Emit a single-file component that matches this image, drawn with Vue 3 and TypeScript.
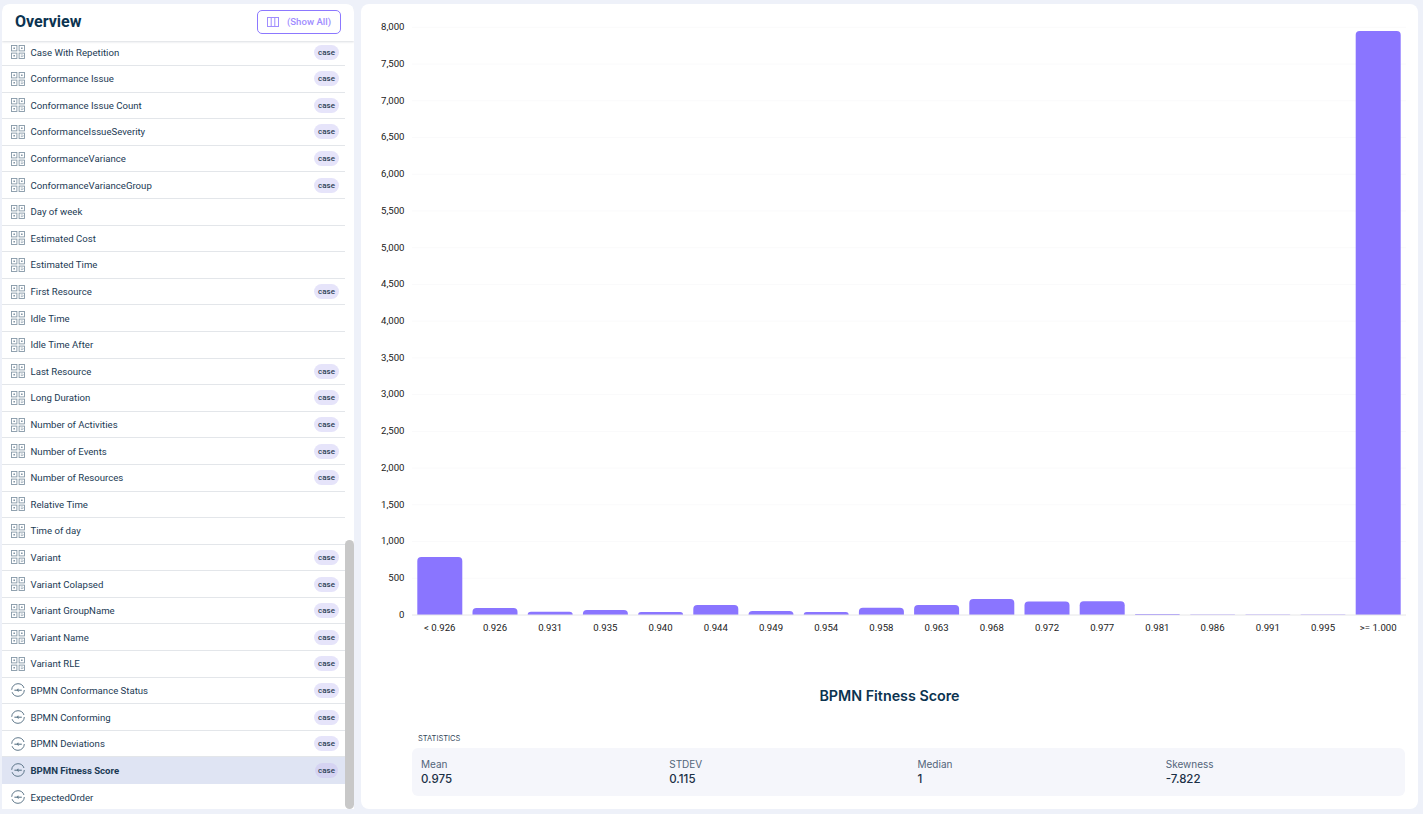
<script setup lang="ts">
type Row = { name: string; icon: 'grid' | 'flow'; tag?: boolean };

const gridRows: [string, boolean][] = [
  ['Case With Repetition', true],
  ['Conformance Issue', true],
  ['Conformance Issue Count', true],
  ['ConformanceIssueSeverity', true],
  ['ConformanceVariance', true],
  ['ConformanceVarianceGroup', true],
  ['Day of week', false],
  ['Estimated Cost', false],
  ['Estimated Time', false],
  ['First Resource', true],
  ['Idle Time', false],
  ['Idle Time After', false],
  ['Last Resource', true],
  ['Long Duration', true],
  ['Number of Activities', true],
  ['Number of Events', true],
  ['Number of Resources', true],
  ['Relative Time', false],
  ['Time of day', false],
  ['Variant', true],
  ['Variant Colapsed', true],
  ['Variant GroupName', true],
  ['Variant Name', true],
  ['Variant RLE', true],
];

const rows: Row[] = [
  ...gridRows.map(([name, tag]): Row => ({ name, icon: 'grid', tag })),
  { name: 'BPMN Conformance Status', icon: 'flow', tag: true },
  { name: 'BPMN Conforming', icon: 'flow', tag: true },
  { name: 'BPMN Deviations', icon: 'flow', tag: true },
  { name: 'BPMN Fitness Score', icon: 'flow', tag: true },
  { name: 'ExpectedOrder', icon: 'flow' },
];
const selected = 'BPMN Fitness Score';

// chart geometry, px inside the svg
const baseY = 611;
const perUnit = 73.46 / 1000;
const ticks = Array.from({ length: 17 }, (_, i) => i * 500);
const tickY = (t: number) => baseY - t * perUnit;

const bins: [string, number][] = [
  ['< 0.926', 790],
  ['0.926', 95],
  ['0.931', 45],
  ['0.935', 68],
  ['0.940', 40],
  ['0.944', 136],
  ['0.949', 55],
  ['0.954', 40],
  ['0.958', 100],
  ['0.963', 136],
  ['0.968', 218],
  ['0.972', 185],
  ['0.977', 188],
  ['0.981', 14],
  ['0.986', 10],
  ['0.991', 10],
  ['0.995', 10],
  ['>= 1.000', 7950],
];
const barW = 45;
const barX = (i: number) => 56.3 + i * 55.2;
const barPath = (i: number, v: number) => {
  const x = barX(i);
  const h = v * perUnit;
  const r = Math.min(4, h);
  return `M${x} ${baseY}V${baseY - h + r}Q${x} ${baseY - h} ${x + r} ${baseY - h}H${x + barW - r}Q${x + barW} ${baseY - h} ${x + barW} ${baseY - h + r}V${baseY}Z`;
};

const stats = [
  { label: 'Mean', value: '0.975' },
  { label: 'STDEV', value: '0.115' },
  { label: 'Median', value: '1' },
  { label: 'Skewness', value: '-7.822' },
];
</script>

<template>
  <div class="page">
    <aside class="side">
      <header class="side-head">
        <h1>Overview</h1>
        <button class="show-all">
          <svg width="12" height="10" viewBox="0 0 12 10" fill="none" stroke="currentColor" stroke-width="1">
            <rect x="0.5" y="0.5" width="11" height="9" />
            <path d="M4.2 0.5v9M7.8 0.5v9" />
          </svg>
          <span>(Show All)</span>
        </button>
      </header>
      <div class="list">
        <div
          v-for="row in rows"
          :key="row.name"
          class="row"
          :class="{ active: row.name === selected }"
        >
          <svg v-if="row.icon === 'grid'" class="ico" width="14" height="14" viewBox="0 0 14 14" fill="none" stroke="#8598a7" stroke-width="0.9">
            <rect x="0.5" y="0.5" width="5.4" height="5.4" />
            <rect x="8.1" y="0.5" width="5.4" height="5.4" />
            <rect x="0.5" y="8.1" width="5.4" height="5.4" />
            <rect x="8.1" y="8.1" width="5.4" height="5.4" />
            <path d="M2.4 3.2h1.6M10 3.2h1.6M2.4 10.8h1.6" stroke-width="1.6" />
            <path d="M9.8 10h1.6l1 .8-1 .8H9.8" stroke-width="0.7" />
          </svg>
          <svg v-else class="ico" width="14" height="14" viewBox="0 0 14 14" fill="none" stroke="#4f6a7e" stroke-width="0.9">
            <circle cx="7" cy="7" r="6.3" stroke-dasharray="17 2.5 17 3" />
            <path d="M3.4 7.2h2.4M8 7.2h2.8" stroke-width="1" />
            <path d="M5.6 7.2l1.6-1.4.4 2.6z" fill="#4f6a7e" stroke-width="0.5" />
          </svg>
          <span class="name">{{ row.name }}</span>
          <span v-if="row.tag" class="tag">case</span>
        </div>
      </div>
      <div class="thumb"></div>
    </aside>

    <main class="main">
      <svg class="chart" width="1057" height="660" viewBox="0 0 1057 660">
        <g v-for="t in ticks" :key="t">
          <line v-if="t > 0" x1="51" :x2="1045" :y1="tickY(t)" :y2="tickY(t)" stroke="#fafafb" />
          <text class="tick" x="43.5" :y="tickY(t) + 2.8" text-anchor="end">{{ t.toLocaleString('en-US') }}</text>
        </g>
        <path
          v-for="(bin, i) in bins"
          :key="bin[0]"
          :d="barPath(i, bin[1])"
          :fill="bin[1] < 12 ? '#b9a9ff' : '#8a75ff'"
        />
        <line x1="51" x2="1045" :y1="baseY" :y2="baseY" stroke="#e6e6e8" />
        <text
          v-for="(bin, i) in bins"
          :key="'l' + bin[0]"
          class="tick"
          :x="barX(i) + barW / 2"
          y="627"
          text-anchor="middle"
        >{{ bin[0] }}</text>
      </svg>
      <h2 class="title">BPMN Fitness Score</h2>
      <div class="stats-label">STATISTICS</div>
      <div class="stats">
        <div v-for="s in stats" :key="s.label" class="stat">
          <div class="stat-label">{{ s.label }}</div>
          <div class="stat-value">{{ s.value }}</div>
        </div>
      </div>
    </main>
  </div>
</template>

<style>
html,
body {
  margin: 0;
  background: #eef1f9;
}
</style>

<style scoped>
.page {
  display: flex;
  gap: 7px;
  height: 814px;
  padding: 4px 5px 5px 2px;
  box-sizing: border-box;
  overflow: hidden;
  font-family: Roboto, "Liberation Sans", sans-serif;
}
.side {
  position: relative;
  width: 352px;
  flex: none;
  display: flex;
  flex-direction: column;
  background: #fff;
  border-radius: 8px 8px 0 0;
  overflow: hidden;
}
.side-head {
  flex: none;
  height: 37px;
  display: flex;
  align-items: center;
  justify-content: space-between;
  padding: 0 13px 2px 13px;
  box-sizing: border-box;
  box-shadow: 0 1px 2px rgba(30, 50, 80, 0.16);
  position: relative;
  z-index: 1;
  background: #fff;
}
.side-head h1 {
  margin: 0;
  font-size: 16px;
  font-weight: 700;
  color: #0b3350;
}
.show-all {
  width: 84px;
  height: 24px;
  display: flex;
  align-items: center;
  justify-content: center;
  gap: 8px;
  padding: 0;
  border: 1px solid #8c78ff;
  border-radius: 5px;
  background: #fff;
  color: #a08dff;
  font-family: inherit;
  font-size: 9.6px;
  font-weight: 500;
}
.list {
  flex: 1;
  width: 343px;
  overflow: hidden;
}
.row {
  height: 26.6px;
  box-sizing: border-box;
  display: flex;
  align-items: center;
  padding: 0 6px 0 9px;
  border-bottom: 1px solid #e3e6ea;
  font-size: 9.6px;
  color: #1b3a54;
}
.row:first-child {
  margin-top: -1.6px;
}
.row:last-child {
  border-bottom: none;
}
.row.active {
  background: #dfe4f3;
  font-weight: 700;
  border-bottom-color: #dfe4f3;
}
.ico {
  flex: none;
  margin-right: 5.5px;
}
.name {
  flex: 1;
}
.tag {
  width: 25px;
  height: 15px;
  line-height: 15px;
  text-align: center;
  border-radius: 8px;
  background: #e6e4fa;
  color: #2b3f55;
  font-size: 8px;
  font-weight: 500;
}
.active .tag {
  width: 23px;
  margin-right: 1px;
  background: #d5d3f2;
}
.thumb {
  position: absolute;
  right: 0;
  top: 536px;
  bottom: 0;
  width: 9px;
  border-radius: 5px;
  background: #c8c8c8;
}
.main {
  flex: 1;
  min-width: 0;
  display: flex;
  flex-direction: column;
  background: #fff;
  border-radius: 8px;
}
.chart {
  display: block;
  flex: none;
}
.tick {
  font-family: Roboto, "Liberation Sans", sans-serif;
  font-size: 9.6px;
  fill: #222;
}
.title {
  margin: 23px 0 0;
  text-align: center;
  font-family: Inter, "Open Sans", sans-serif;
  font-size: 14.3px;
  line-height: 18px;
  font-weight: 600;
  color: #0b3350;
}
.stats-label {
  margin: 29px 0 0 57px;
  font-family: Inter, "Open Sans", sans-serif;
  font-size: 7.5px;
  line-height: 10px;
  color: #33475b;
}
.stats {
  margin: 4px 13px 0 51px;
  height: 48px;
  display: grid;
  grid-template-columns: repeat(4, 1fr);
  align-items: center;
  background: #f5f6fb;
  border-radius: 6px;
}
.stat {
  padding-left: 9px;
  font-family: Inter, "Open Sans", sans-serif;
}
.stat-label {
  font-size: 10px;
  line-height: 14px;
  color: #53657a;
}
.stat-value {
  font-size: 11.5px;
  line-height: 16px;
  font-weight: 500;
  color: #1b3046;
}
</style>
